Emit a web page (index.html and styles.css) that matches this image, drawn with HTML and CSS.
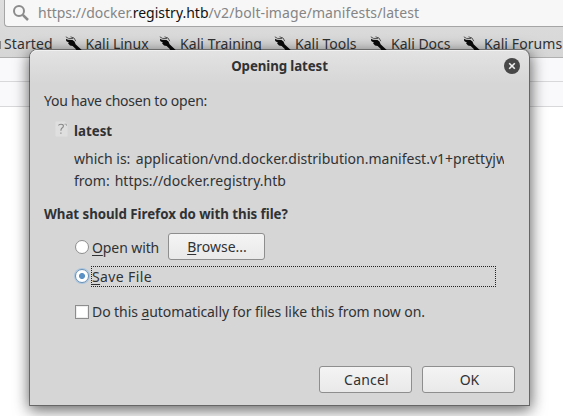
FILE: index.html
```html
<!DOCTYPE html>
<html lang="en">
<head>
<meta charset="utf-8">
<title>Opening latest</title>
<link rel="stylesheet" href="styles.css">
</head>
<body>
<svg class="defs" width="0" height="0">
  <symbol id="kali" viewBox="0 0 18 16">
    <path d="M1 2.8 L3 3.8 L7.5 4 L9.5 5.5 L10.6 8.2 L13.5 11 L17 14.3 V16 H12.6 L10.3 12.4 L7.6 9.9 L5 9.4 L3 7.3 L4 6.8 L1.2 5Z" fill="#0a0a0a"/>
    <path d="M.8 .8 L3.5 2.4 L8 2.6 M5.5 .8 L9 2 L10.8 5.2" fill="none" stroke="#333" stroke-width=".8"/>
  </symbol>
</svg>
<header class="toolbar">
  <div class="urlbar">
    <svg class="search" viewBox="0 0 18 18"><circle cx="7" cy="7" r="5" fill="none" stroke="#8b8b8b" stroke-width="2"/><path d="M10.8 10.8 L16 16" stroke="#8b8b8b" stroke-width="2.5"/></svg>
    <span class="url">https://docker.<b>registry.htb</b><span class="path">/v2/bolt-image/manifests/latest</span></span>
  </div>
  <nav class="bookmarks">
    <span class="bookmark started">Started</span>
    <span class="bookmark linux"><svg><use href="#kali"/></svg>Kali Linux</span>
    <span class="bookmark training"><svg><use href="#kali"/></svg>Kali Training</span>
    <span class="bookmark tools"><svg><use href="#kali"/></svg>Kali Tools</span>
    <span class="bookmark docs"><svg><use href="#kali"/></svg>Kali Docs</span>
    <span class="bookmark forums"><svg><use href="#kali"/></svg>Kali Forums</span>
  </nav>
</header>
<div class="page-row"></div>
<div class="page-row"></div>

<section class="dialog">
  <div class="titlebar">
    <h1>Opening latest</h1>
    <svg class="close" viewBox="0 0 16 16"><circle cx="8" cy="8" r="8" fill="#474747"/><path d="M5.2 5.2 L10.8 10.8 M10.8 5.2 L5.2 10.8" stroke="#f0f0f0" stroke-width="1.6"/></svg>
  </div>
  <p class="intro">You have chosen to open:</p>
  <div class="file">
    <svg class="file-icon" viewBox="0 0 13 16"><path d="M.5 .5 H10 L12.5 3 V15.5 H.5Z" fill="#dfdfdf"/><path d="M3.5 4.5 Q3.8 3.2 6 3.2 Q8.4 3.2 8.4 5 Q8.4 6.3 6.8 7.3 Q5.9 8 5.9 9.7 M5.9 11.4 V12.8" fill="none" stroke="#858585" stroke-width="1.1"/><path d="M9.5 3.2 H11.5 V4.8" fill="none" stroke="#999" stroke-width=".8"/></svg>
    <strong>latest</strong>
  </div>
  <div class="detail type"><span>which is:</span><span class="value">application/vnd.docker.distribution.manifest.v1+prettyjws</span></div>
  <div class="detail"><span>from:</span><span class="value">https://docker.registry.htb</span></div>
  <h2>What should Firefox do with this file?</h2>
  <div class="open-row"><i class="radio"></i><span class="open-label"><u>O</u>pen with</span><button class="browse"><span><u>B</u>rowse...</span></button></div>
  <div class="save-row"><i class="radio checked"></i><span class="save-label"><u>S</u>ave File</span></div>
  <div class="auto-row"><i class="checkbox"></i><span>Do this <u>a</u>utomatically for files like this from now on.</span></div>
  <footer><button class="cancel"><span>Cancel</span></button><button class="ok"><span>OK</span></button></footer>
</section>
</body>
</html>
```
FILE: styles.css
```css
* { box-sizing: border-box; }
body {
  margin: 0;
  height: 416px;
  overflow: hidden;
  background: #fff;
  color: #303234;
  font: 14px/20px "Noto Sans", sans-serif;
}
h1, h2, p { margin: 0; }
.defs { position: absolute; }
u {
  text-decoration: underline;
  text-decoration-thickness: 1px;
  text-underline-offset: 2px;
  text-decoration-skip-ink: none;
}

.toolbar {
  height: 58px;
  background: linear-gradient(#dedede, #d6d6d6);
  border-bottom: 1px solid #b0b0b0;
}
.urlbar {
  height: 27px;
  margin-left: 4px;
  padding: 3px 0 0 7px;
  display: flex;
  background: #f7f7f7;
  border: 1px solid #a5a5a5;
  border-width: 0 0 1px 1px;
  border-radius: 0 0 0 4px;
}
.search { width: 18px; height: 18px; margin: 1px 8px 0 0; }
.url { color: #858585; white-space: nowrap; }
.url b { color: #111; font-weight: 400; }
.path { letter-spacing: .09px; }
.bookmarks {
  display: flex;
  padding: 7px 0 0 4px;
  white-space: nowrap;
}
.bookmark { display: flex; flex: none; }
.bookmark svg { width: 18px; height: 16px; margin: 2px 3px 0 0; }
.started { width: 60.5px; letter-spacing: .1px; }
.linux { width: 94.5px; }
.training { width: 115px; letter-spacing: .08px; }
.tools { width: 96px; }
.docs { width: 93px; }
.forums { letter-spacing: .08px; }
.started::before {
  content: "";
  width: 1px;
  height: 8px;
  margin: 7px 3px 0 -4px;
  background: #888;
}
.page-row { height: 24px; background: #f9f9fb; border-bottom: 1px solid #d8d8da; }
.page-row + .page-row { height: 25px; }

.dialog {
  position: absolute;
  left: 30px;
  top: 50px;
  width: 500px;
  height: 356px;
  padding: 0 14px;
  background: linear-gradient(#e3e3e3, #d6d6d6 34px);
  border: 1px solid #666;
  border-width: 0 1px 1px 0;
  border-radius: 7px 7px 0 0;
  box-shadow: inset 0 1px #f1f1f1, -1px 0 rgba(0,0,0,.4), 0 -1px rgba(0,0,0,.35), 0 3px 15px 1px rgba(0,0,0,.62);
}
.titlebar { height: 41px; padding-top: 6px; display: flex; }
h1 {
  flex: 1;
  padding-left: 11px;
  text-align: center;
  font: bold 13.3px/20px "Noto Sans", sans-serif;
  letter-spacing: -.1px;
}
.close { width: 16px; height: 16px; margin: 2px -5px 0 0; }
.intro { height: 30px; letter-spacing: -.22px; }
.file { display: flex; height: 28px; padding-left: 11px; }
.file-icon { width: 13px; height: 16px; margin-right: 6px; }
strong, h2 { font: bold 13.3px/20px "Noto Sans", sans-serif; }
.detail {
  display: flex;
  gap: 5px;
  height: 22px;
  margin-left: 30px;
  width: 430px;
  overflow: hidden;
  white-space: nowrap;
}
.detail .value { letter-spacing: .03px; }
.type { gap: 5.5px; }
.type .value { letter-spacing: 0; }
h2 { height: 29px; margin-top: 11px; letter-spacing: -.04px; }
.open-row { display: flex; height: 33px; padding-left: 31px; }
.open-label { margin: 5px 9px 0 3px; width: 67px; letter-spacing: -.1px; white-space: nowrap; }
.radio {
  flex: none;
  width: 14px;
  height: 14px;
  margin-top: 7px;
  background: #fff;
  border: 1px solid #8d8d8d;
  border-radius: 50%;
}
.radio.checked {
  margin-top: 3px;
  background: radial-gradient(circle, #5b91c5 0 2.6px, #fff 3.4px);
  border-color: #6690b8;
  box-shadow: 0 0 0 1px #a9c5df;
}
button {
  height: 27px;
  padding: 0;
  color: inherit;
  font: inherit;
  background: linear-gradient(#f4f4f4, #e9e9e9);
  border: 1px solid #8e8e8e;
  border-radius: 3px;
}
button span { display: block; }
.browse { width: 97px; }
.browse span { padding-left: 1px; }
.save-row { display: flex; height: 21px; padding-left: 31px; }
.save-label {
  width: 405px;
  height: 21px;
  margin-left: 2px;
  line-height: 20px;
  letter-spacing: .38px;
  outline: 1px dotted #222;
  outline-offset: -1px;
  padding: 1px 0 0 1px;
}
.auto-row { display: flex; margin-top: 15px; padding-left: 31px; letter-spacing: -.075px; }
.auto-row span { white-space: nowrap; }
.checkbox {
  width: 14px;
  height: 14px;
  margin: 3px 3px 0 0;
  background: #fff;
  border: 1px solid #8d8d8d;
  box-shadow: inset 0 0 0 1px #eee;
}
footer { display: flex; justify-content: flex-end; gap: 10px; margin-top: 44px; }
.cancel, .ok { width: 93px; }
.cancel { letter-spacing: .2px; }
.cancel span, .ok span { padding-left: 2px; }
```
